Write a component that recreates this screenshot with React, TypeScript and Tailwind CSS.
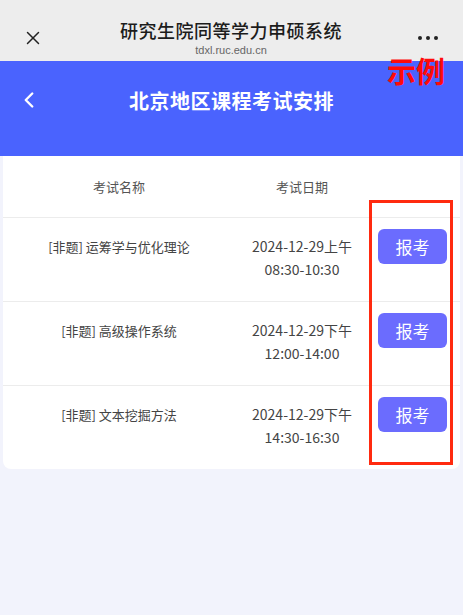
import { X, ChevronLeft } from "lucide-react";

const rows = [
  { name: "[非题] 运筹学与优化理论", date: "2024-12-29上午", time: "08:30-10:30" },
  { name: "[非题] 高级操作系统", date: "2024-12-29下午", time: "12:00-14:00" },
  { name: "[非题] 文本挖掘方法", date: "2024-12-29下午", time: "14:30-16:30" },
];

export default function App() {
  return (
    <div
      className="relative w-[463px] h-[615px] bg-[#f2f3fc] overflow-hidden"
      style={{ fontFamily: '"Noto Sans CJK SC", "Noto Sans", sans-serif' }}
    >
      {/* browser bar */}
      <div className="h-[61px] bg-[#ededed] flex items-center px-[22px]">
        <X className="w-[22px] h-[22px] text-[#222] mt-[14px]" strokeWidth={1.6} />
        <div className="flex-1 flex flex-col items-center pt-[14px]">
          <div className="text-[18px] leading-[22px] font-medium text-[#1c1c1c] tracking-[0.5px]">研究生院同等学力申硕系统</div>
          <div className="text-[11px] leading-[14px] text-[#666] mt-[2px]" style={{ fontFamily: '"Liberation Sans", sans-serif' }}>
            tdxl.ruc.edu.cn
          </div>
        </div>
        <div className="flex gap-[4px] mt-[14px] mr-[3px]">
          <span className="w-[4px] h-[4px] rounded-full bg-[#222]" />
          <span className="w-[4px] h-[4px] rounded-full bg-[#222]" />
          <span className="w-[4px] h-[4px] rounded-full bg-[#222]" />
        </div>
      </div>

      {/* blue header */}
      <div className="h-[95px] bg-[#4a63fe] flex items-start pt-[26px] px-[16px]">
        <ChevronLeft className="w-[26px] h-[26px] text-white" strokeWidth={2.2} />
        <div className="flex-1 text-center text-white text-[20px] leading-[28px] font-bold mr-[26px] tracking-[0.5px]">
          北京地区课程考试安排
        </div>
      </div>

      {/* table card */}
      <div className="mx-[3px] bg-white rounded-b-[8px]">
        <div className="flex h-[61px] items-center text-[13px] text-[#555]">
          <div className="w-[232px] text-center">考试名称</div>
          <div className="w-[134px] text-center">考试日期</div>
          <div className="flex-1" />
        </div>
        {rows.map((r) => (
          <div key={r.name} className="flex h-[84px] border-t border-[#ececec] text-[13px] text-[#444]">
            <div className="w-[232px] text-center pt-[20px] leading-[18px]">{r.name}</div>
            <div className="w-[134px] text-center pt-[17px] leading-[23px] text-[14px]">
              <div>{r.date}</div>
              <div>{r.time}</div>
            </div>
            <div className="flex-1 pt-[11px] pl-[9px]">
              <button className="w-[69px] h-[35px] rounded-[6px] bg-[#6b6cfe] text-white text-[17px] leading-none">
                报考
              </button>
            </div>
          </div>
        ))}
      </div>

      {/* annotation overlays */}
      <div className="absolute left-[387px] top-[52px] text-[#ff0a0a] text-[29px] leading-[36px] font-bold">示例</div>
      <div className="absolute left-[369px] top-[200px] w-[84px] h-[265px] border-[3px] border-[#ff2a0f]" />
    </div>
  );
}
